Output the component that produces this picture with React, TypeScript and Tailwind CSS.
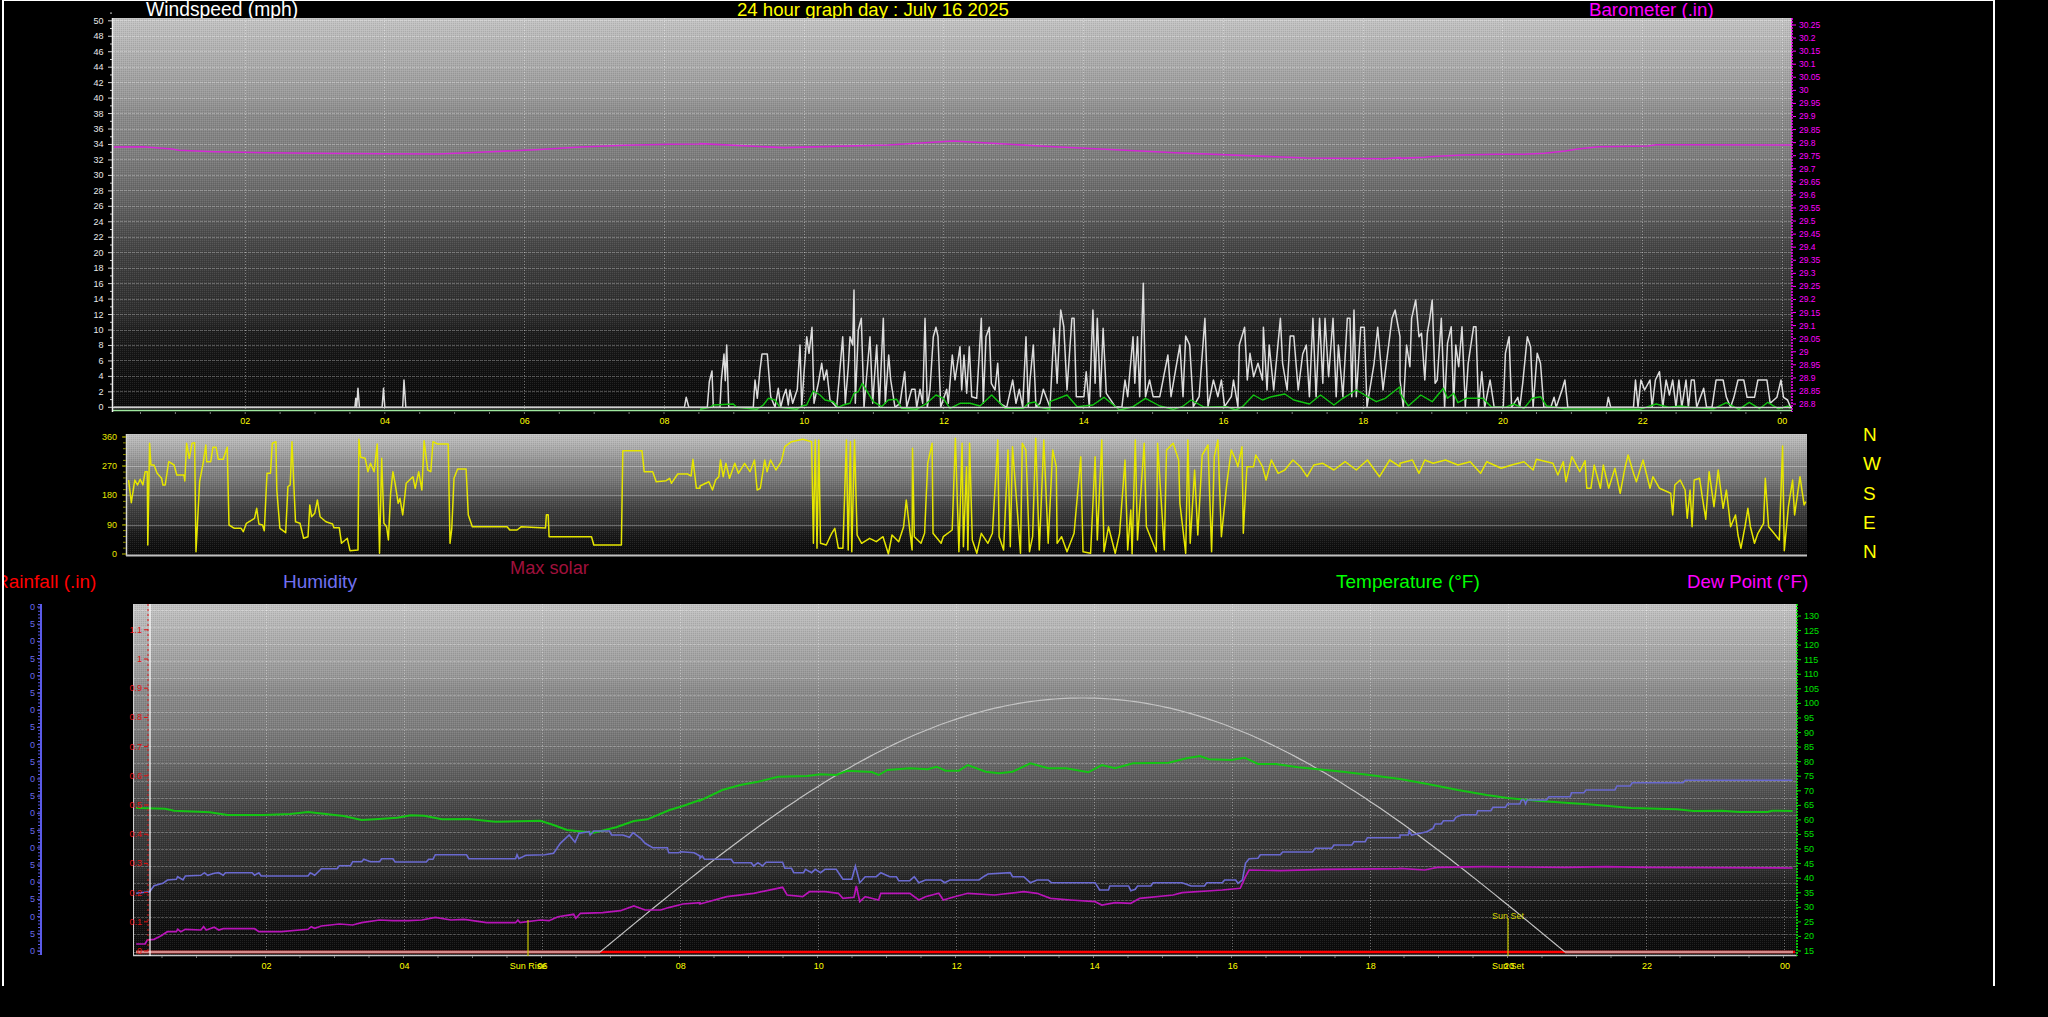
// App.tsx - 24 hour weather graphs
const pts = (raw: string, ox: number, oy: number, sx: number, sy = 3) =>
  raw
    .trim()
    .split(/\s+/)
    .map((p) => {
      const [x, y] = p.split(",").map(Number);
      return `${(ox + x / sx).toFixed(1)},${(oy + y / sy).toFixed(1)}`;
    })
    .join(" ");

const baro = [
  pts("255,441 320,440 385,447 400,451 480,455 600,458 700,460 860,461 980,462 1100,455 1200,449 1300,441 1400,436 1500,433 1568,432", 0, 0, 2.24),
  pts("536,110 600,113 680,111 730,108 800,112 900,117 1000,121 1060,121.5 1072,120.7", 0, 0, 0.7657, 0.7657),
  pts("0,475 60,472 70,470 150,465 230,463 300,463 350,460 400,453 430,447 480,440 600,438 620,434 700,434 945,435", 1400, 0, 2.42),
].join(" ");

const wind = [
  pts("255,1222 795,1222 797,1195 799,1222 802,1165 805,1222 856,1222 859,1165 862,1222 902,1222 905,1140 909,1222 1533,1222 1537,1192 1543,1222 1568,1222", 0, 0, 2.24),
  pts("0,352 22,352 28,275 36,243 40,352 60,352 64,272 72,192 76,272 80,165 86,352 160,352 165,270 172,325 180,240 186,192 202,192 212,320 225,352 235,295 242,352 250,320 258,298 265,345 270,300 278,340 292,298 300,165 305,352 312,250 320,140 327,190 336,112 342,340 355,280 365,220 372,270 380,240 390,330 410,352 428,140 436,340 445,230 450,140 458,165 462,0 466,340 475,120 484,85 492,352 498,280 510,140 518,340 530,165 538,352 550,85 556,340 566,195 572,270 585,352 600,340 614,245 620,352 635,298 645,298 650,352 660,298 668,340 675,85 682,352 690,298 700,140 708,112 714,140 722,352 740,298 745,340 757,195 765,270 780,170 785,300 792,195 800,310 808,170 815,320 830,325 844,85 850,340 858,140 868,112 874,280 885,300 893,220 900,340 920,352 938,270 948,340 958,298 968,352 978,140 985,352 990,270 1000,165 1008,352 1020,340 1030,298 1050,352", 700, 290, 3),
  pts("784,472 793,235 800,400 808,180 815,230 822,420 833,205 838,205 843,440 860,440 865,365 872,470 880,180 885,400 890,205 897,440 903,235 910,430 930,470 945,472 952,390 958,440 970,260 974,400 980,260 985,440 993,100 998,440 1007,390 1015,440 1030,440 1048,315 1055,440 1075,285 1082,440 1088,258 1097,285 1105,470 1118,440 1131,205 1138,470 1150,390 1160,440 1168,390 1175,470 1190,440 1195,390 1205,470 1208,285 1220,232 1226,390 1232,310 1240,380 1250,340 1260,390 1262,232 1270,420 1275,285 1285,420 1300,205 1305,340 1315,420 1322,258 1330,258 1340,420 1350,312 1358,285 1365,440 1373,205 1380,440 1388,205 1395,400 1400,205 1408,380 1418,205 1425,440 1430,285 1440,440 1450,205 1456,205 1460,440 1465,180 1470,440 1480,232 1488,232 1494,470 1510,340 1518,232 1530,420 1545,260 1550,205 1557,180 1568,260", 700, 250, 2.24),
  pts("0,1140 8,1222 16,1035 24,1100 28,955 38,900 46,1010 52,1000 60,1140 66,1000 72,955 78,900 85,1150 90,1140 100,955 108,1222 115,1030 124,980 130,1222 135,1035 142,1100 150,980 158,1222 165,1090 178,980 184,980 190,1222 198,1115 205,1222 218,1140 228,1222 250,1222 255,1060 264,1010 270,1222 285,1192 290,1222 297,1150 308,1010 316,1040 322,1222 332,1060 340,1090 348,1222 365,1222 373,1192 378,1222 392,1170 399,1140 406,1222 500,1222 504,1192 510,1222 565,1222 570,1140 576,1222 583,1140 592,1170 605,1140 610,1222 618,1140 628,1115 636,1222 644,1140 652,1185 660,1140 668,1222 675,1140 682,1222 692,1140 698,1222 705,1140 712,1140 718,1222 735,1165 742,1222 755,1222 765,1140 782,1140 790,1192 800,1222 808,1192 818,1140 832,1140 840,1192 858,1192 866,1140 888,1140 896,1210 912,1192 922,1140 928,1192 938,1200 945,1222", 1400, 0, 2.42),
].join(" ");

const gust = [
  pts("0,358 30,352 40,345 100,342 110,352 170,358 190,345 205,325 225,330 240,352 290,358 305,348 320,345 340,303 360,315 375,330 400,335 415,352 430,345 450,340 462,310 475,305 487,280 505,310 520,335 545,350 565,330 590,328 605,355 650,358 680,340 708,315 730,325 750,355 780,340 810,340 840,348 875,315 900,340 915,355 970,355 985,340 1005,336 1020,352 1050,358", 700, 290, 3),
  pts("784,455 822,435 845,470 880,465 905,442 940,480 970,470 998,445 1030,468 1060,478 1080,470 1100,450 1130,472 1180,470 1200,480 1215,470 1240,435 1260,450 1280,440 1310,432 1330,450 1365,462 1390,435 1420,465 1440,445 1470,420 1495,440 1515,455 1535,445 1568,410", 700, 250, 2.24),
  pts("0,1180 20,1218 50,1185 78,1205 105,1165 115,1195 130,1180 140,1208 160,1195 200,1195 222,1222 255,1222 275,1212 300,1225 320,1195 340,1190 355,1218 400,1226 580,1228 620,1212 650,1222 680,1218 700,1222 760,1226 790,1208 820,1228 845,1207 870,1226 890,1207 915,1226 940,1218 945,1226", 1400, 0, 2.42),
].join(" ");

const direction = [
  pts("288,180 294,248 302,180 308,195 314,178 320,195 325,155 330,155 331,375 335,70 338,135 345,135 352,160 362,175 365,195 370,195 378,125 390,135 396,165 412,165 414,183 418,70 424,115 430,70 436,68 439,395 442,320 447,185 455,130 461,75 463,125 472,125 477,82 484,82 489,118 500,118 509,82 513,315 525,325 540,325 545,335 552,310 570,295 575,265 580,312 588,315 592,332 598,160 606,160 610,70 618,65 620,210 627,325 640,338 645,200 650,195 654,65 656,130 662,305 672,310 680,355 690,350 694,255 698,290 705,280 711,240 717,290 730,305 745,312 748,323 760,323 765,370 778,355 784,392 802,390 804,58 808,112 818,115 824,155 830,130 838,155 845,72 850,400 855,115 860,310 866,320 870,360 875,220 880,155 885,190 892,250 896,235 902,285 910,190 925,170 930,205 938,155 945,210 950,62 958,150 965,155 970,65 980,72 1004,72 1008,370 1012,325 1017,175 1025,147 1044,147 1049,285 1058,320 1136,320 1142,330 1158,330 1168,320 1222,324 1224,284 1228,284 1230,350 1325,350 1330,375 1392,375 1395,92 1438,92 1443,155 1462,155 1470,185 1492,182 1500,175 1504,190 1518,162 1540,162 1548,168 1552,118 1560,205 1568,205", 0, 420, 2.24),
  pts("0,708 20,695 28,720 35,690 42,680 46,630 52,680 58,640 66,685 78,640 86,670 100,640 112,665 122,630 128,720 135,715 145,630 150,665 158,630 170,660 182,635 190,590 205,575 230,568 250,575 254,880 258,570 262,895 266,570 270,880 283,885 295,850 302,835 310,895 320,895 328,570 332,900 337,575 340,905 346,570 352,855 362,880 380,865 395,875 410,860 422,912 430,855 445,875 456,830 462,750 475,900 476,595 480,860 495,880 503,850 510,640 520,580 522,850 540,880 545,860 565,840 572,565 580,905 587,580 590,890 597,650 600,900 604,580 610,870 620,910 630,850 645,880 655,850 667,570 670,860 680,900 690,600 695,890 700,590 718,910 722,580 730,600 738,905 745,860 752,565 760,900 770,570 780,880 790,600 798,650 800,880 810,860 822,905 838,850 853,620 858,905 875,910 885,620 890,870 900,570 905,905 915,830 930,910 940,850 952,630 958,900 965,780 968,912 975,570 980,870 995,580 1000,830 1022,905 1025,580 1040,900 1045,600 1060,580 1072,630 1075,760 1088,910 1093,570 1098,880 1108,660 1115,855 1125,615 1138,585 1146,905 1152,620 1160,570 1168,860 1180,700 1190,600 1200,630 1205,650 1214,590 1217,850 1225,650 1240,650 1245,615 1260,650 1268,690 1280,630 1295,670 1310,660 1328,630 1345,650 1360,680 1375,645 1395,640 1420,660 1445,635 1470,660 1495,630 1522,680 1545,630 1568,650", 700, 250, 2.24),
  pts("0,130 30,120 46,160 60,120 80,130 110,120 140,135 170,125 195,160 210,125 245,145 270,135 300,125 322,150 330,118 370,130 382,165 395,125 402,185 416,110 435,155 448,122 452,205 462,205 470,135 485,205 492,135 505,205 520,145 533,220 545,140 552,105 565,160 572,185 588,120 605,205 612,170 628,205 655,220 660,285 665,195 678,180 690,210 695,295 702,210 707,320 712,180 725,175 732,235 740,298 748,155 760,260 770,150 782,265 790,210 800,320 812,285 818,345 825,385 835,320 842,265 848,320 858,370 866,340 880,310 884,175 892,320 905,340 918,360 926,78 930,392 940,260 950,180 955,285 968,170 978,255 982,245", 1400, 420, 2.42),
].join(" ");

const temperature = [
  pts("305,264 370,266 390,272 470,277 510,285 590,285 650,282 690,276 730,282 770,288 810,300 840,298 890,293 920,286 950,287 990,298 1050,297 1110,305 1210,302 1240,315 1270,330 1330,338 1380,322 1420,303 1450,298 1500,270 1530,258 1568,240", 0, 720, 2.24),
  pts("0,362 50,330 90,315 130,305 175,290 240,288 270,283 305,285 330,272 385,276 400,285 420,270 470,265 510,268 530,260 550,272 580,272 600,255 640,275 670,280 700,275 740,250 780,265 820,265 870,277 900,255 930,265 970,250 1050,248 1090,235 1120,228 1140,238 1190,240 1220,233 1250,252 1290,252 1340,262 1440,275 1500,285 1568,297", 700, 680, 2.24),
  pts("0,177 70,193 140,210 210,225 260,234 330,242 400,248 470,254 560,264 670,268 710,273 780,272 820,276 890,276 900,272 950,273", 1400, 720, 2.42),
].join(" ");

const humidity = [
  pts("305,520 335,515 345,497 365,490 375,480 395,478 398,470 410,480 415,468 450,466 458,458 465,466 480,460 490,458 500,466 505,458 565,458 570,466 580,458 585,468 690,468 695,458 705,466 720,446 755,446 760,437 785,437 790,425 810,425 815,418 830,425 850,425 855,416 880,416 885,426 955,426 960,418 970,418 975,404 1045,404 1050,416 1155,416 1158,404 1162,416 1178,406 1220,404 1240,400 1255,370 1275,345 1288,367 1297,340 1320,335 1322,345 1330,333 1365,333 1370,345 1395,345 1410,352 1418,338 1435,355 1445,370 1462,383 1495,383 1498,398 1520,398 1525,395 1555,398 1568,408", 0, 720, 2.24),
  pts("0,535 5,528 10,538 70,538 75,548 115,548 120,558 130,548 140,558 148,547 185,547 190,565 205,565 210,578 232,578 236,568 250,578 258,568 270,578 280,568 305,568 320,598 340,598 348,558 358,608 370,590 395,590 405,578 425,590 440,590 445,602 470,602 480,590 490,608 505,600 540,600 548,608 560,600 625,600 635,590 645,582 695,578 700,590 725,590 740,608 755,600 780,600 787,608 885,608 895,630 915,630 918,618 960,618 965,632 975,628 980,618 1010,618 1015,608 1080,608 1100,618 1130,618 1135,608 1170,608 1175,600 1200,600 1205,610 1215,600 1222,550 1230,536 1250,535 1255,524 1300,524 1305,516 1372,516 1378,505 1415,505 1420,495 1460,495 1465,485 1490,485 1495,473 1568,473", 700, 680, 2.24),
  pts("0,345 20,345 22,333 28,345 65,335 80,325 85,312 100,312 105,302 130,302 135,292 150,284 185,284 188,272 220,272 225,262 255,262 260,252 290,252 294,240 300,240 304,252 308,240 355,240 360,230 412,230 415,218 445,218 450,210 520,210 525,198 557,198 562,188 685,188 690,181 950,181", 1400, 720, 2.42),
].join(" ");

const dewPoint = [
  pts("305,672 325,672 330,660 345,658 360,648 375,635 395,635 398,628 405,635 415,628 450,630 456,620 462,630 480,622 490,630 500,626 570,626 580,635 630,635 690,628 697,620 705,625 720,618 760,612 790,615 810,608 850,600 880,602 915,602 945,600 975,592 1010,600 1040,598 1090,608 1155,608 1160,600 1165,608 1210,600 1230,602 1250,590 1285,583 1290,595 1300,580 1350,578 1390,572 1420,558 1445,570 1480,570 1500,562 1530,552 1568,548", 0, 720, 2.24),
  pts("0,672 60,650 120,640 185,622 195,645 230,650 245,635 280,635 310,640 320,655 345,652 350,618 358,665 370,650 400,660 405,640 470,640 490,660 505,650 535,640 545,660 570,650 600,640 660,645 725,635 755,640 785,655 830,660 885,665 900,675 930,668 965,670 985,655 1060,645 1080,638 1170,630 1210,625 1222,590 1230,570 1300,572 1400,568 1568,566", 700, 680, 2.24),
  pts("0,445 60,450 90,442 200,440 400,442 500,440 600,442 950,444", 1400, 720, 2.42),
].join(" ");

const hours = Array.from({ length: 12 }, (_, i) => (i + 1) * 2);
const hourLabel = (h: number) => String(h % 24).padStart(2, "0");
const range = (n: number) => Array.from({ length: n }, (_, i) => i);

// max solar is a plain sine arc between sunrise and sunset
const solar = range(194)
  .map((i) => {
    const x = 600 + i * 5;
    return `${x},${(952 - 254 * Math.sin((Math.PI * (x - 600)) / 965)).toFixed(1)}`;
  })
  .join(" ");

function PlotBackground({ id, x, y, w, h }: { id: string; x: number; y: number; w: number; h: number }) {
  return (
    <>
      <defs>
        <linearGradient id={`${id}-bg`} x1="0" y1="0" x2="0" y2="1">
          <stop offset="0" stopColor="#c4c4c4" />
          <stop offset="0.08" stopColor="#b2b2b2" />
          <stop offset="0.2" stopColor="#999999" />
          <stop offset="0.25" stopColor="#8a8a8a" />
          <stop offset="0.34" stopColor="#7f7f7f" />
          <stop offset="0.41" stopColor="#707070" />
          <stop offset="0.47" stopColor="#626262" />
          <stop offset="0.55" stopColor="#4c4c4c" />
          <stop offset="0.62" stopColor="#3e3e3e" />
          <stop offset="0.76" stopColor="#2c2c2c" />
          <stop offset="0.8" stopColor="#1c1c1c" />
          <stop offset="0.9" stopColor="#101010" />
          <stop offset="1" stopColor="#090909" />
        </linearGradient>
        <pattern id={`${id}-dither`} width="2" height="2" patternUnits="userSpaceOnUse">
          <rect x="0" y="0" width="1" height="1" fill="#ffffff" opacity="0.09" />
          <rect x="1" y="1" width="1" height="1" fill="#000000" opacity="0.09" />
        </pattern>
      </defs>
      <rect x={x} y={y} width={w} height={h} fill={`url(#${id}-bg)`} />
      <rect x={x} y={y} width={w} height={h} fill={`url(#${id}-dither)`} shapeRendering="crispEdges" />
    </>
  );
}

function Label({ x, y, fill, anchor = "end", size = 9, children }: { x: number; y: number; fill: string; anchor?: "start" | "middle" | "end"; size?: number; children: React.ReactNode }) {
  return (
    <text x={x} y={y} fill={fill} textAnchor={anchor} dominantBaseline="central" fontSize={size}>
      {children}
    </text>
  );
}

function WindChart() {
  const gy = (k: number) => 407.3 - k * 15.46;
  const hx = (t: number) => 105.5 + t * 69.87;
  const baroLabels = range(30).map((i) => String(Number((30.25 - i * 0.05).toFixed(2))));
  return (
    <svg viewBox="4 18 1900 412" className="block h-[412px] w-[1900px] overflow-visible font-['Liberation_Sans',sans-serif]">
      <PlotBackground id="wind" x={112} y={18} w={1680} h={393} />
      {range(26).map((k) => (
        <line key={k} x1={112} x2={1792} y1={gy(k)} y2={gy(k)} stroke="#ffffff" strokeOpacity="0.26" strokeDasharray="3 1" shapeRendering="crispEdges" />
      ))}
      {hours.map((h) => (
        <line key={h} x1={hx(h)} x2={hx(h)} y1={18} y2={411} stroke="#ffffff" strokeOpacity="0.4" strokeDasharray="1 2" shapeRendering="crispEdges" />
      ))}
      <polyline points={baro} fill="none" stroke="#d428d4" strokeWidth="1.6" />
      <polyline points={wind} fill="none" stroke="#dcdcdc" strokeWidth="1.5" strokeLinejoin="round" />
      <polyline points={gust} fill="none" stroke="#12c412" strokeWidth="1.4" strokeLinejoin="round" />
      <line x1={112} x2={1792} y1={407.5} y2={407.5} stroke="#d0d0d0" strokeWidth="1.5" />
      <line x1={112} x2={1792} y1={410.5} y2={410.5} stroke="#9fe89f" strokeWidth="1.5" />
      <line x1={112.5} x2={112.5} y1={18} y2={412} stroke="#f0f0f0" strokeWidth="1.5" />
      <line x1={1792} x2={1792} y1={18} y2={412} stroke="#ff00ff" strokeWidth="1.5" strokeDasharray="2 1" />
      {range(26).map((k) => (
        <g key={k}>
          <line x1={108} x2={112} y1={gy(k)} y2={gy(k)} stroke="#d0d0d0" />
          <line x1={110} x2={112} y1={gy(k) - 7.7} y2={gy(k) - 7.7} stroke="#d0d0d0" />
          <Label x={103.5} y={gy(k)} fill="#e8e8e8">{k * 2}</Label>
        </g>
      ))}
      {baroLabels.map((b, i) => (
        <g key={b}>
          <line x1={1793} x2={1796} y1={25 + i * 13.07} y2={25 + i * 13.07} stroke="#ff00ff" />
          <Label x={1799} y={25 + i * 13.07} fill="#ff00ff" anchor="start" size={8.5}>{b}</Label>
        </g>
      ))}
      {hours.map((h) => (
        <Label key={h} x={hx(h)} y={421} fill="#ffff00" anchor="middle">{hourLabel(h)}</Label>
      ))}
      {range(48).map((i) => (
        <line key={i} x1={140.5 + i * 34.9} x2={140.5 + i * 34.9} y1={412} y2={414} stroke="#777777" />
      ))}
    </svg>
  );
}

function DirectionChart() {
  return (
    <svg viewBox="4 430 1859 130" className="block h-[130px] w-[1859px] shrink-0 font-['Liberation_Sans',sans-serif]">
      <PlotBackground id="dir" x={126} y={434} w={1681} h={122} />
      {[466, 495, 525].map((y) => (
        <line key={y} x1={126} x2={1807} y1={y} y2={y} stroke="#ffffff" strokeOpacity="0.3" shapeRendering="crispEdges" />
      ))}
      <polyline points={direction} fill="none" stroke="#e6e600" strokeWidth="1.5" strokeLinejoin="round" />
      <line x1={126.5} x2={126.5} y1={434} y2={556} stroke="#d8d8d8" strokeWidth="1.5" />
      <line x1={126} x2={1807} y1={555.5} y2={555.5} stroke="#c0c0c0" strokeWidth="2" />
      {[
        ["360", 437],
        ["270", 466],
        ["180", 495],
        ["90", 525],
        ["0", 554],
      ].map(([v, y]) => (
        <g key={v}>
          <line x1={122} x2={126} y1={Number(y)} y2={Number(y)} stroke="#b8b800" />
          <Label x={117} y={Number(y)} fill="#e6e600">{v}</Label>
        </g>
      ))}
      {range(20).map((i) => (
        <line key={i} x1={123} x2={126} y1={437 + i * 5.85} y2={437 + i * 5.85} stroke="#8a8a00" />
      ))}
    </svg>
  );
}

function ClimateChart() {
  const gy = (k: number) => 952 - k * 17.1;
  const hx = (t: number) => 128.5 + t * 69.02;
  const rain = ["0", "0.1", "0.2", "0.3", "0.4", "0.5", "0.6", "0.7", "0.8", "0.9", "1", "1.1"];
  const temps = range(24).map((i) => 15 + i * 5);
  return (
    <svg viewBox="4 604 1900 381" className="block h-[381px] w-[1900px] font-['Liberation_Sans',sans-serif]">
      {/* humidity axis, its labels are cut off by the page */}
      <line x1={41} x2={41} y1={604} y2={955} stroke="#5a5ae8" strokeWidth="2" />
      <line x1={39} x2={39} y1={604} y2={955} stroke="#5a5ae8" strokeWidth="2" strokeDasharray="1 2.4" />
      {range(21).map((k) => (
        <g key={k}>
          <line x1={37} x2={41} y1={951 - k * 17.2} y2={951 - k * 17.2} stroke="#5a5ae8" />
          <Label x={35} y={951 - k * 17.2} fill="#6a6ae8">{k % 2 === 0 ? "0" : "5"}</Label>
        </g>
      ))}

      <PlotBackground id="climate" x={133} y={604} w={1664} h={352} />
      {range(21).map((k) => (
        <line key={k} x1={133} x2={1797} y1={gy(k)} y2={gy(k)} stroke="#ffffff" strokeOpacity="0.25" strokeDasharray="3 1" shapeRendering="crispEdges" />
      ))}
      {hours.map((h) => (
        <line key={h} x1={hx(h)} x2={hx(h)} y1={604} y2={956} stroke="#ffffff" strokeOpacity="0.38" strokeDasharray="1 2" shapeRendering="crispEdges" />
      ))}

      <line x1={136} x2={1795} y1={952} y2={952} stroke="#ff0000" strokeWidth="2.5" />
      <line x1={136} x2={600} y1={952} y2={952} stroke="#d48a8a" strokeWidth="2.5" />
      <line x1={1565} x2={1793} y1={952} y2={952} stroke="#d48a8a" strokeWidth="2.5" />

      <polyline points={solar} fill="none" stroke="#c4c4c4" strokeWidth="1.2" />
      <polyline points={temperature} fill="none" stroke="#14c414" strokeWidth="2" />
      <polyline points={humidity} fill="none" stroke="#6a6ad0" strokeWidth="1.6" />
      <polyline points={dewPoint} fill="none" stroke="#b814b8" strokeWidth="1.7" />

      <line x1={133.5} x2={133.5} y1={604} y2={956} stroke="#cfcfcf" />
      <line x1={133} x2={1797} y1={955.5} y2={955.5} stroke="#c8c8c8" strokeWidth="1.5" />
      <line x1={150} x2={150} y1={604} y2={956} stroke="#ffffff" strokeWidth="1.2" />
      <line x1={148} x2={148} y1={604} y2={952} stroke="#e01010" strokeDasharray="2 3" />
      <line x1={1797} x2={1797} y1={604} y2={956} stroke="#00ff00" strokeWidth="1.5" strokeDasharray="2 1" />

      {rain.map((r, i) => (
        <g key={r}>
          <line x1={144} x2={148} y1={951 - i * 29.2} y2={951 - i * 29.2} stroke="#e01010" />
          <Label x={142} y={951 - i * 29.2} fill="#e01010">{r}</Label>
        </g>
      ))}
      {temps.map((t) => (
        <g key={t}>
          <line x1={1798} x2={1801} y1={951 - (t - 15) * 2.913} y2={951 - (t - 15) * 2.913} stroke="#00e000" />
          <Label x={1804} y={951 - (t - 15) * 2.913} fill="#00e000" anchor="start">{t}</Label>
        </g>
      ))}

      <line x1={528} x2={528} y1={920} y2={956} stroke="#c8c800" strokeWidth="1.2" />
      <line x1={1508} x2={1508} y1={918} y2={956} stroke="#c8c800" strokeWidth="1.2" />
      <Label x={1508} y={916} fill="#d4d400" anchor="middle">Sun Set</Label>
      <Label x={528} y={966} fill="#ffff00" anchor="middle">Sun Rise</Label>
      <Label x={1508} y={966} fill="#ffff00" anchor="middle">Sun Set</Label>
      {hours.map((h) => (
        <Label key={h} x={hx(h)} y={966} fill="#ffff00" anchor="middle">{hourLabel(h)}</Label>
      ))}
      {range(48).map((i) => (
        <line key={i} x1={162 + i * 34.5} x2={162 + i * 34.5} y1={956} y2={958} stroke="#777777" />
      ))}
    </svg>
  );
}

export default function App() {
  return (
    <div className="h-[1017px] w-full overflow-hidden bg-black font-['Liberation_Sans',sans-serif]">
      <div className="ml-[2px] h-[986px] w-[1993px] border-x-2 border-t border-white">
        <div className="flex h-[17px] items-start whitespace-nowrap text-[19px] leading-[17px]">
          <span className="ml-[142px] w-[591px] shrink-0 text-[19.3px] text-white">Windspeed (mph)</span>
          <span className="w-[852px] shrink-0 text-[18.6px] text-[#ffff00]">24 hour graph day : July 16 2025</span>
          <span className="text-[18.7px] text-[#ff00ff]">Barometer (.in)</span>
        </div>

        <WindChart />

        <div className="flex h-[130px]">
          <DirectionChart />
          <div className="-mt-[10px] flex flex-col text-[19px] leading-[29.3px] text-[#ffff00]">
            <span>N</span>
            <span>W</span>
            <span>S</span>
            <span>E</span>
            <span>N</span>
          </div>
        </div>

        <div className="flex h-[44px] items-start whitespace-nowrap text-[19px] leading-[44px]">
          <span className="w-[279px] shrink-0 overflow-hidden">
            <span className="-ml-[9px] block text-[#ff0000]">Rainfall (.in)</span>
          </span>
          <span className="w-[227px] shrink-0 text-[#7070f0]">Humidity</span>
          <span className="w-[826px] shrink-0 text-[18.2px] leading-[16px] text-[#a0103c]">Max solar</span>
          <span className="w-[351px] shrink-0 text-[#00ff00]">Temperature (°F)</span>
          <span className="text-[18.6px] text-[#ff00ff]">Dew Point (°F)</span>
        </div>

        <ClimateChart />
      </div>
    </div>
  );
}
